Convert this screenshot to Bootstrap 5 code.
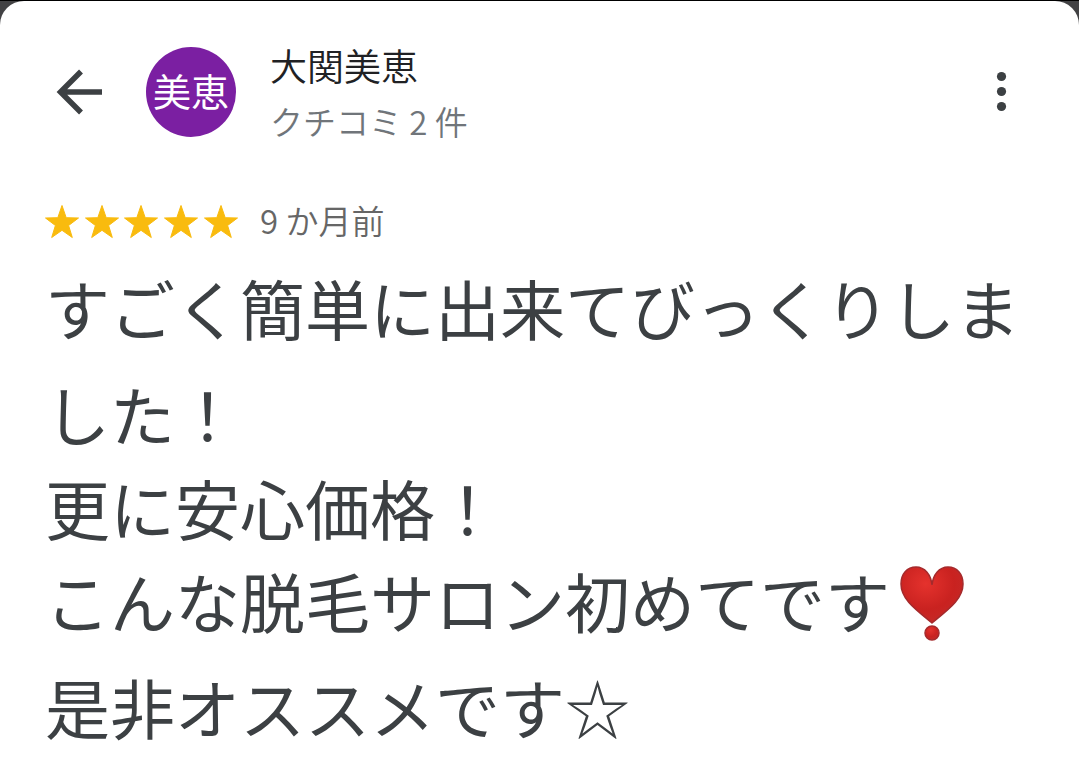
<!DOCTYPE html>
<html lang="ja">
<head>
<meta charset="utf-8">
<meta name="viewport" content="width=device-width, initial-scale=1">
<title>クチコミ</title>
<link href="https://cdn.jsdelivr.net/npm/bootstrap@5.3.0/dist/css/bootstrap.min.css" rel="stylesheet">
<style>
body{background:linear-gradient(#000 1px,#424244 1px);font-family:Roboto,"Noto Sans CJK JP",sans-serif;color:#3c4043}
.sheet{background:#fff;border-radius:24px 24px 0 0;margin-top:1px;min-height:calc(100vh - 1px);padding:46px 45px 0}
.head-row{height:90px}
.icon-btn{width:48px;height:48px;color:#3c4043}
.back-btn{margin-left:9px}
.menu-btn{margin-right:9px}
.avatar{width:90px;height:90px;background:#7b1fa2;font-size:38px;line-height:92px;margin-left:44px}
.who{margin-left:34px;padding-top:2px}
.who-name{font-size:37px;line-height:56px;color:#202124}
.who-count{font-size:33px;line-height:56px;color:#70757a}
.who-name,.who-count,.age{font-family:"Noto Sans CJK JP",sans-serif;font-weight:350}
.rating{margin-top:55px;height:60px;margin-bottom:8px}
.stars{width:200px;height:40px;margin-left:-3px}
.age{font-size:33px;line-height:60px;color:#666;margin-left:18px;padding-bottom:4px}
.review{font-size:65px;line-height:93px;font-weight:400}
.review p{margin:0}
.review .opening{line-height:106px;margin-bottom:-5px}
.review .closing{margin-top:13px}
.heart{width:64px;height:76px;margin-left:10px;vertical-align:-14px}
</style>
</head>
<body>
<main class="sheet">
<header class="d-flex align-items-center head-row">
<button type="button" class="btn border-0 p-0 icon-btn back-btn d-flex align-items-center justify-content-center" aria-label="戻る"><svg width="48" height="48" viewBox="0 0 48 48" fill="none" stroke="currentColor" stroke-width="5.5"><path d="M48 24H8M27 3.500L6.500 24 27 44.500"/></svg></button>
<div class="avatar rounded-circle text-white text-center flex-shrink-0">美恵</div>
<div class="who"><div class="who-name">大関美恵</div><div class="who-count">クチコミ 2 件</div></div>
<button type="button" class="btn border-0 p-0 icon-btn menu-btn ms-auto d-flex" aria-label="メニュー"><svg width="48" height="48" viewBox="0 0 48 48" fill="currentColor"><circle cx="24.500" cy="8.500" r="4.600"/><circle cx="24.500" cy="23.500" r="4.600"/><circle cx="24.500" cy="38.500" r="4.600"/></svg></button>
</header>
<div class="rating d-flex align-items-center">
<svg class="stars" viewBox="0 0 200 40" role="img" aria-label="星 5 個" fill="#f9bb0e" stroke="#f9bb0e" stroke-width="1" stroke-linejoin="round">
<defs><path id="star" d="M20 3.500l4.200 12.200L36.500 16 26.600 23.500 30.300 35.500 20 28.300 9.700 35.500 13.400 23.500 3.500 16l12.300-.3z"/></defs>
<use href="#star"/><use href="#star" x="40"/><use href="#star" x="79"/><use href="#star" x="119"/><use href="#star" x="159"/>
</svg>
<span class="age">9 か月前</span></div>
<div class="review">
<p class="opening">すごく簡単に出来てびっくりしました！</p>
<p>更に安心価格！</p>
<p>こんな脱毛サロン初めてです<svg class="heart" viewBox="0 0 64 76" role="img" aria-label="ハートの感嘆符">
<defs><radialGradient id="red" cx=".4" cy=".3" r=".7"><stop offset="0" stop-color="#e5322d"/><stop offset=".65" stop-color="#c92220"/><stop offset="1" stop-color="#c52826"/></radialGradient></defs>
<g fill="url(#red)" stroke="#a52a2c" stroke-width="1.500"><path d="M32 19C31 9 25 1 16 1C7 1 1 8 1 18C1 33 15 43 32 57C49 43 63 33 63 18C63 8 57 1 48 1C39 1 33 9 32 19Z"/><circle cx="32" cy="67" r="7"/></g></svg></p>
<p class="closing">是非オススメです☆</p>
</div>
</main>
<script src="https://cdn.jsdelivr.net/npm/bootstrap@5.3.0/dist/js/bootstrap.bundle.min.js"></script>
</body>
</html>
